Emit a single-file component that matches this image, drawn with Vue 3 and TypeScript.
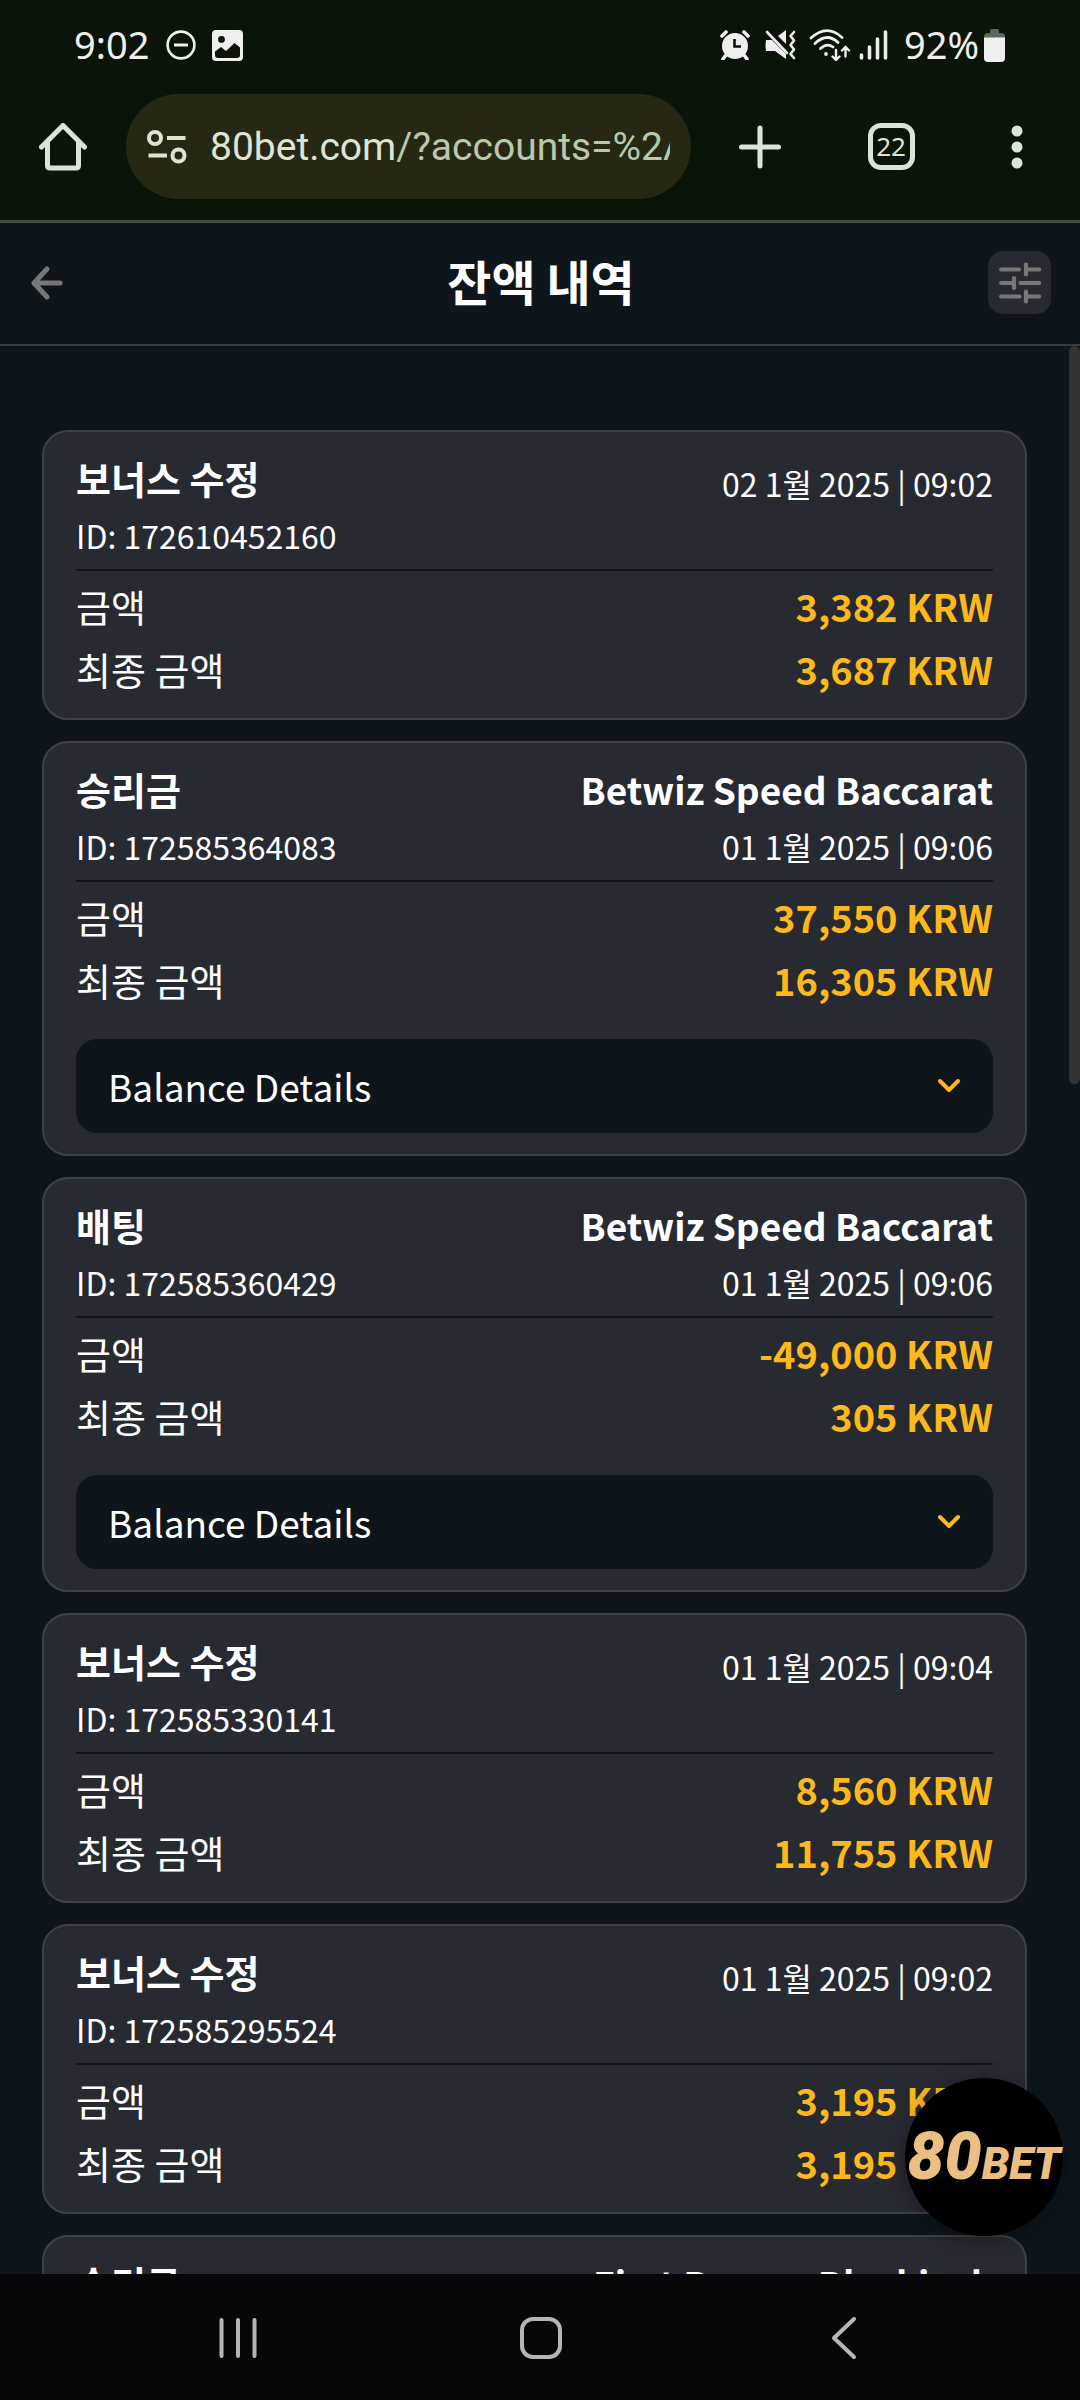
<script setup lang="ts">
import { ref } from 'vue'

interface Entry {
  kind: string
  game?: string
  id?: string
  date?: string
  amount?: string
  total?: string
  details?: boolean
}

const address = { host: '80bet.com', rest: '/?accounts=%2A' }
const tabCount = 22

const entries = ref<Entry[]>([
  { kind: '보너스 수정', id: '172610452160', date: '02 1월 2025 | 09:02', amount: '3,382', total: '3,687' },
  { kind: '승리금', game: 'Betwiz Speed Baccarat', id: '172585364083', date: '01 1월 2025 | 09:06', amount: '37,550', total: '16,305', details: true },
  { kind: '배팅', game: 'Betwiz Speed Baccarat', id: '172585360429', date: '01 1월 2025 | 09:06', amount: '-49,000', total: '305', details: true },
  { kind: '보너스 수정', id: '172585330141', date: '01 1월 2025 | 09:04', amount: '8,560', total: '11,755' },
  { kind: '보너스 수정', id: '172585295524', date: '01 1월 2025 | 09:02', amount: '3,195', total: '3,195' },
  { kind: '승리금', game: 'First Person Blackjack' },
])
</script>

<template>
  <div class="screen">
    <header class="browser">
      <div class="status">
        <span class="clock">9:02</span>
        <svg class="dnd" width="30" height="30" viewBox="0 0 30 30" fill="none" stroke="currentColor">
          <circle cx="15" cy="15" r="13.4" stroke-width="2.6" />
          <path d="M8 15h14" stroke-width="3" />
        </svg>
        <svg class="shot" width="31" height="31" viewBox="0 0 31 31">
          <path fill="currentColor" fill-rule="evenodd" d="M4 0h23a4 4 0 0 1 4 4v23a4 4 0 0 1-4 4H4a4 4 0 0 1-4-4V4a4 4 0 0 1 4-4zM9.500 6a3.400 3.400 0 1 0 0 6.800a3.400 3.400 0 0 0 0-6.800zM3 21.500V25q0 3 3 3h19q3 0 3-3v-7.500L22.500 13L14 21L9 17z" />
        </svg>
        <span class="spacer"></span>
        <svg width="30" height="30" viewBox="0 0 30 30">
          <circle cx="15" cy="16" r="13" fill="currentColor" />
          <path d="M2 6l4-4M28 6l-4-4M6 25l-3 4M24 25l3 4" stroke="currentColor" stroke-width="3.600" stroke-linecap="round" />
          <path d="M14.500 9v7.500H21" fill="none" stroke="#0a1409" stroke-width="2.600" />
        </svg>
        <svg class="mute" width="31" height="30" viewBox="0 0 31 30">
          <path d="M1 10h6L21 24v5L10 21H1q-1-5 0-11z" fill="currentColor" />
          <path d="M13 6l8-6v14z" fill="currentColor" />
          <path d="M2 2l20 21" stroke="currentColor" stroke-width="2.600" stroke-linecap="round" />
          <path d="M29 2l-3.500 4l3.500 4.500l-3.500 4.500l3.500 4.500l-3.500 4.500l3.500 4" fill="none" stroke="currentColor" stroke-width="2.600" stroke-linecap="round" stroke-linejoin="round" />
        </svg>
        <svg class="wifi" width="42" height="32" viewBox="0 0 42 32" fill="none" stroke="currentColor" stroke-width="2.800" stroke-linecap="round">
          <path d="M2 9Q18-5.500 33 8.500M6 14.500Q18 3 29 13.500M11.500 19.500Q18 13.500 24 18" />
          <circle cx="17" cy="25" r="1.900" fill="currentColor" stroke="none" />
          <path d="M27 21v9.500M23.500 27.500l3.500 3.500l3.500-3.500M36.500 27.500V18.500M33 21.500l3.500-3.500l3.500 3.500" stroke-width="2.400" />
        </svg>
        <svg class="signal" width="29" height="30" viewBox="0 0 29 30" stroke="currentColor" stroke-width="3.600" stroke-linecap="round">
          <path d="M2.500 25v3M10.500 17v11M18.500 9v19M26.500 2v26" />
        </svg>
        <span class="percent">92%</span>
        <svg class="battery" width="21" height="33" viewBox="0 0 21 33">
          <path d="M6 4V2q0-2 2-2h5q2 0 2 2v2h2q4 0 4 4v3H0V8q0-4 4-4z" fill="#5f665e" />
          <path d="M0 8.500h21V29q0 4-4 4H4q-4 0-4-4z" fill="currentColor" />
        </svg>
      </div>

      <div class="toolbar">
        <button class="tool" type="button" aria-label="홈">
          <svg width="48" height="48" viewBox="0 0 48 48" fill="none" stroke="currentColor" stroke-width="5" stroke-linecap="round" stroke-linejoin="round">
            <path d="M2.500 24L24 2.500L45.500 24M8.500 20v22.500q0 2.500 2.500 2.500h26q2.500 0 2.500-2.500V20" />
          </svg>
        </button>
        <a class="omnibox" href="#">
          <svg width="40" height="34" viewBox="0 0 40 34" fill="none" stroke="currentColor" stroke-width="4">
            <circle cx="8" cy="8" r="6" />
            <circle cx="31.500" cy="25.500" r="6" />
            <path d="M20 8h18.500M1.500 25.500H20" />
          </svg>
          <span class="url">{{ address.host }}<span class="rest">{{ address.rest }}</span></span>
        </a>
        <button class="tool plus" type="button" aria-label="새 탭">
          <svg width="42" height="44" viewBox="0 0 42 44" stroke="currentColor" stroke-width="5" stroke-linecap="round">
            <path d="M21 3v38M2.500 22h37" />
          </svg>
        </button>
        <button class="tool" type="button"><span class="tabs">{{ tabCount }}</span></button>
        <button class="tool" type="button" aria-label="메뉴">
          <svg width="12" height="44" viewBox="0 0 12 44" fill="currentColor">
            <circle cx="6" cy="6" r="5.500" /><circle cx="6" cy="22" r="5.500" /><circle cx="6" cy="38" r="5.500" />
          </svg>
        </button>
      </div>
    </header>

    <div class="page-head">
      <button class="back" type="button" aria-label="뒤로">
        <svg width="32" height="34" viewBox="0 0 32 34" fill="none" stroke="currentColor" stroke-width="5" stroke-linecap="round" stroke-linejoin="round">
          <path d="M16 3L3 17l13 14M3 17h26" />
        </svg>
      </button>
      <h1>잔액 내역</h1>
      <button class="filter" type="button" aria-label="필터">
        <svg width="42" height="42" viewBox="0 0 42 42" stroke="currentColor" stroke-width="4.200" stroke-linecap="round">
          <path d="M2.200 7.500H20M27 2.500v10M27 7.500h13M2.200 21H15M15 16v10M21.500 21H40M2.200 34.500H20.500M27 29.500v10M27 34.500h13" />
        </svg>
      </button>
    </div>

    <main class="body">
      <div class="list">
        <article v-for="(e, i) in entries" :key="i" class="card">
          <div class="card-head">
            <div class="left">
              <h2>{{ e.kind }}</h2>
              <p v-if="e.id">ID: {{ e.id }}</p>
            </div>
            <div class="right">
              <h3 v-if="e.game">{{ e.game }}</h3>
              <p v-if="e.date">{{ e.date }}</p>
            </div>
          </div>
          <dl v-if="e.amount">
            <div><dt>금액</dt><dd>{{ e.amount }} KRW</dd></div>
            <div><dt>최종 금액</dt><dd>{{ e.total }} KRW</dd></div>
          </dl>
          <button v-if="e.details" class="details" type="button">
            Balance Details
            <svg width="24" height="16" viewBox="0 0 24 16" fill="none" stroke="currentColor" stroke-width="4" stroke-linecap="round" stroke-linejoin="round">
              <path d="M3 3l9 9l9-9" />
            </svg>
          </button>
        </article>
      </div>
      <div class="thumb"></div>
      <a class="brand" href="#">80<span>BET</span></a>
    </main>

    <nav class="sysnav">
      <button type="button" aria-label="최근 앱">
        <svg width="42" height="44" viewBox="0 0 42 44" stroke="currentColor" stroke-width="4" stroke-linecap="round">
          <path d="M4.500 4v36M21 4v36M37.500 4v36" />
        </svg>
      </button>
      <button type="button" aria-label="홈 화면">
        <svg width="42" height="44" viewBox="0 0 42 44" fill="none" stroke="currentColor" stroke-width="4">
          <rect x="2" y="3" width="38" height="38" rx="11" />
        </svg>
      </button>
      <button type="button" aria-label="이전">
        <svg width="42" height="44" viewBox="0 0 42 44" fill="none" stroke="currentColor" stroke-width="4" stroke-linecap="round" stroke-linejoin="round">
          <path d="M31 3L11 22l20 19" />
        </svg>
      </button>
    </nav>
  </div>
</template>

<style>
body {
  background: #0e161c;
}
</style>

<style scoped>
.screen {
  display: flex;
  flex-direction: column;
  height: 100vh;
  background: #0e161c;
  color: #fff;
  font-family: "Noto Sans CJK KR", sans-serif;
}
h1, h2, h3, p, dl, dd {
  margin: 0;
}
button {
  padding: 0;
  border: 0;
  background: none;
  color: inherit;
  font: inherit;
}
a {
  color: inherit;
  text-decoration: none;
}
svg {
  display: block;
  flex: none;
}
.browser {
  flex: none;
  padding-bottom: 17px;
  border-bottom: 3px solid #434b3b;
  background: #0a1409;
  color: #dce5d5;
}
.status {
  display: flex;
  align-items: center;
  height: 90px;
  padding: 0 75px 0 74px;
  color: #eeefed;
  font: 38px/44px "Noto Sans", sans-serif;
}
.clock,
.percent {
  padding-bottom: 3px;
}
.dnd {
  margin-left: 17px;
}
.shot {
  margin-left: 16px;
}
.spacer {
  flex: 1;
}
.mute {
  margin-left: 15px;
}
.wifi {
  margin-left: 13px;
}
.signal {
  margin-left: 8px;
}
.percent {
  margin-left: 16px;
}
.battery {
  margin-left: 5px;
}
.toolbar {
  display: flex;
  align-items: center;
  height: 113px;
}
.tool {
  display: flex;
  flex: none;
  align-items: center;
  justify-content: center;
  width: 126px;
  height: 105px;
}
.plus {
  width: 137px;
}
.omnibox {
  display: flex;
  flex: 1;
  align-items: center;
  gap: 23px;
  min-width: 0;
  height: 105px;
  padding: 0 21px;
  border-radius: 53px;
  box-sizing: border-box;
  background: #262814;
}
.url {
  overflow: hidden;
  font: 39px/60px Roboto, sans-serif;
  white-space: nowrap;
}
.rest {
  color: #b9c9ad;
}
.tabs {
  width: 37px;
  height: 37px;
  border: 5px solid currentColor;
  border-radius: 13px;
  font: 26px/37px "Noto Sans", sans-serif;
  text-align: center;
}
.page-head {
  display: grid;
  grid-template-columns: 1fr auto 1fr;
  flex: none;
  align-items: center;
  height: 119px;
  padding: 0 29px 2px 31px;
  border-bottom: 2px solid #3a3b3d;
}
.page-head h1 {
  padding-bottom: 6px;
  font-size: 48px;
  font-weight: 700;
  line-height: 64px;
}
.back {
  justify-self: start;
  color: #777;
}
.filter {
  display: flex;
  align-items: center;
  justify-content: center;
  justify-self: end;
  width: 63px;
  height: 63px;
  border-radius: 15px;
  background: #272a31;
  color: #777;
}
.body {
  position: relative;
  flex: 1;
  min-height: 0;
}
.list {
  display: flex;
  flex-direction: column;
  gap: 21px;
  height: 100%;
  padding: 84px 53px 0 42px;
  overflow-y: auto;
  box-sizing: border-box;
  scrollbar-width: none;
}
.card {
  flex: none;
  padding: 20px 32px 15px;
  border: 2px solid #404143;
  border-radius: 26px;
  background: #272a31;
}
.card-head {
  display: flex;
  justify-content: space-between;
  padding-bottom: 2px;
  border-bottom: 2px solid #0e161c;
}
.right {
  text-align: right;
}
h2 {
  font-size: 38px;
  font-weight: 700;
  line-height: 52px;
}
h3 {
  font-size: 37px;
  font-weight: 700;
  line-height: 52px;
}
p {
  font-size: 32px;
  line-height: 63px;
}
dl {
  padding: 3px 0;
}
dl div {
  display: flex;
  justify-content: space-between;
  font-size: 38px;
  line-height: 63px;
}
dd {
  color: #fdb81e;
  font-weight: 700;
}
.details {
  display: flex;
  align-items: center;
  justify-content: space-between;
  width: 100%;
  height: 94px;
  margin: 25px 0 6px;
  padding: 0 32px;
  border-radius: 21px;
  background: #0e161c;
  font-size: 37px;
}
.details svg {
  color: #fdb81e;
}
.thumb {
  position: absolute;
  top: 0;
  right: 0;
  width: 11px;
  height: 738px;
  border-radius: 6px;
  background: #333;
}
.brand {
  position: absolute;
  right: 17px;
  bottom: 38px;
  width: 158px;
  height: 158px;
  border-radius: 50%;
  background: #000;
  box-shadow: 0 6px 24px rgba(0, 0, 0, 0.3);
  color: #ebbf82;
  font: italic 900 66px/158px Roboto, sans-serif;
  text-align: center;
  white-space: nowrap;
}
.brand span {
  font-size: 44px;
}
.sysnav {
  display: flex;
  flex: none;
  align-items: center;
  justify-content: center;
  gap: 261px;
  height: 124px;
  padding: 2px 0 0 2px;
  background: #07060b;
  color: #b6b6b8;
}
</style>
